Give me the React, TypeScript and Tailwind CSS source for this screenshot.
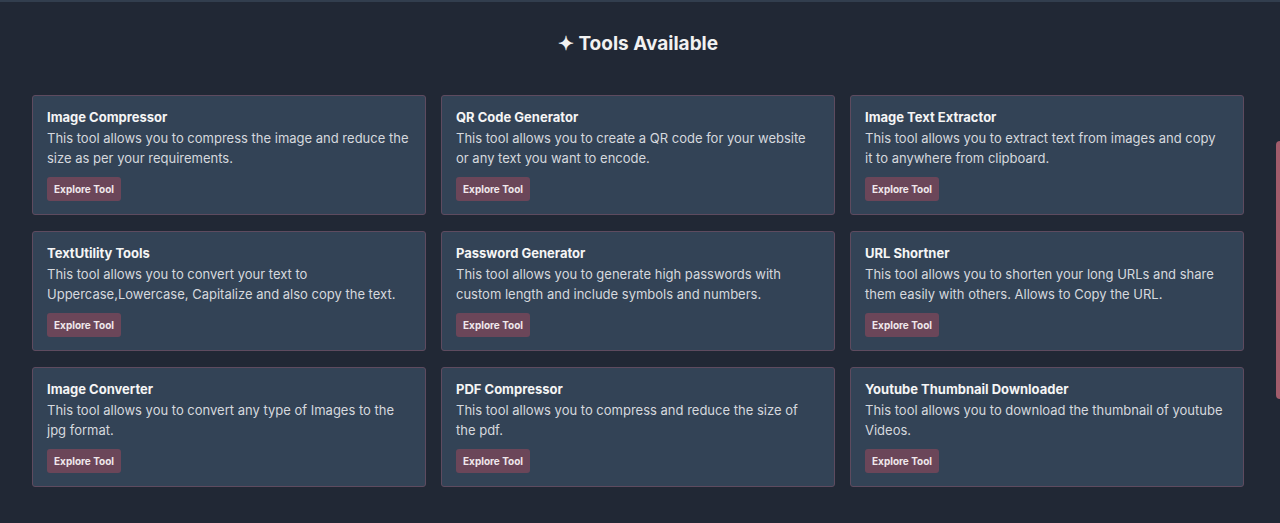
import React from 'react';

const tools = [
  {
    title: 'Image Compressor',
    desc: ['This tool allows you to compress the image and reduce the size as per your requirements.'],
  },
  {
    title: 'QR Code Generator',
    desc: ['This tool allows you to create a QR code for your website or any text you want to encode.'],
  },
  {
    title: 'Image Text Extractor',
    desc: ['This tool allows you to extract text from images and copy', 'it to anywhere from clipboard.'],
  },
  {
    title: 'TextUtility Tools',
    desc: ['This tool allows you to convert your text to Uppercase,Lowercase, Capitalize and also copy the text.'],
  },
  {
    title: 'Password Generator',
    desc: ['This tool allows you to generate high passwords with custom length and include symbols and numbers.'],
  },
  {
    title: 'URL Shortner',
    desc: ['This tool allows you to shorten your long URLs and share them easily with others. Allows to Copy the URL.'],
  },
  {
    title: 'Image Converter',
    desc: ['This tool allows you to convert any type of Images to the jpg format.'],
  },
  {
    title: 'PDF Compressor',
    desc: ['This tool allows you to compress and reduce the size of the pdf.'],
  },
  {
    title: 'Youtube Thumbnail Downloader',
    desc: ['This tool allows you to download the thumbnail of youtube Videos.'],
  },
];

export default function App() {
  return (
    <div
      className="relative min-h-[523px] bg-[#212835] border-t-2 border-[#323e4e] text-white"
      style={{ fontFamily: 'Inter, "Noto Sans", sans-serif' }}
    >
      <section className="pt-[30px] pb-9 pl-8 pr-9">
        <h2 className="text-center text-[19px] font-bold leading-[24px] text-[#f1f1f1]">
          ✦ Tools Available
        </h2>

        <div className="mt-[39px] grid grid-cols-3 gap-x-[15px] gap-y-[16px]">
          {tools.map((t) => (
            <div
              key={t.title}
              className="h-[120px] rounded-[3px] border border-[#5e4b5f] bg-[#334356] px-[14px] pt-[12px]"
            >
              <h3 className="text-[13px] font-bold leading-[18px] text-[#f5f5f5]">{t.title}</h3>
              <p className="mt-[3px] text-[13px] leading-[19.5px] text-[#d6d9de]">
                {t.desc.map((line, i) => (
                  <React.Fragment key={i}>
                    {i > 0 && <br />}
                    {line}
                  </React.Fragment>
                ))}
              </p>
              <button className="mt-[9px] h-6 rounded-[3px] bg-[#6b4659] px-[7px] text-[10px] font-bold text-[#f0e8ec]">
                Explore Tool
              </button>
            </div>
          ))}
        </div>
      </section>

      {/* scroll thumb */}
      <div className="absolute right-0 top-[139px] h-[258px] w-[4px] rounded-l-sm bg-[#a25c6b]" />
    </div>
  );
}
